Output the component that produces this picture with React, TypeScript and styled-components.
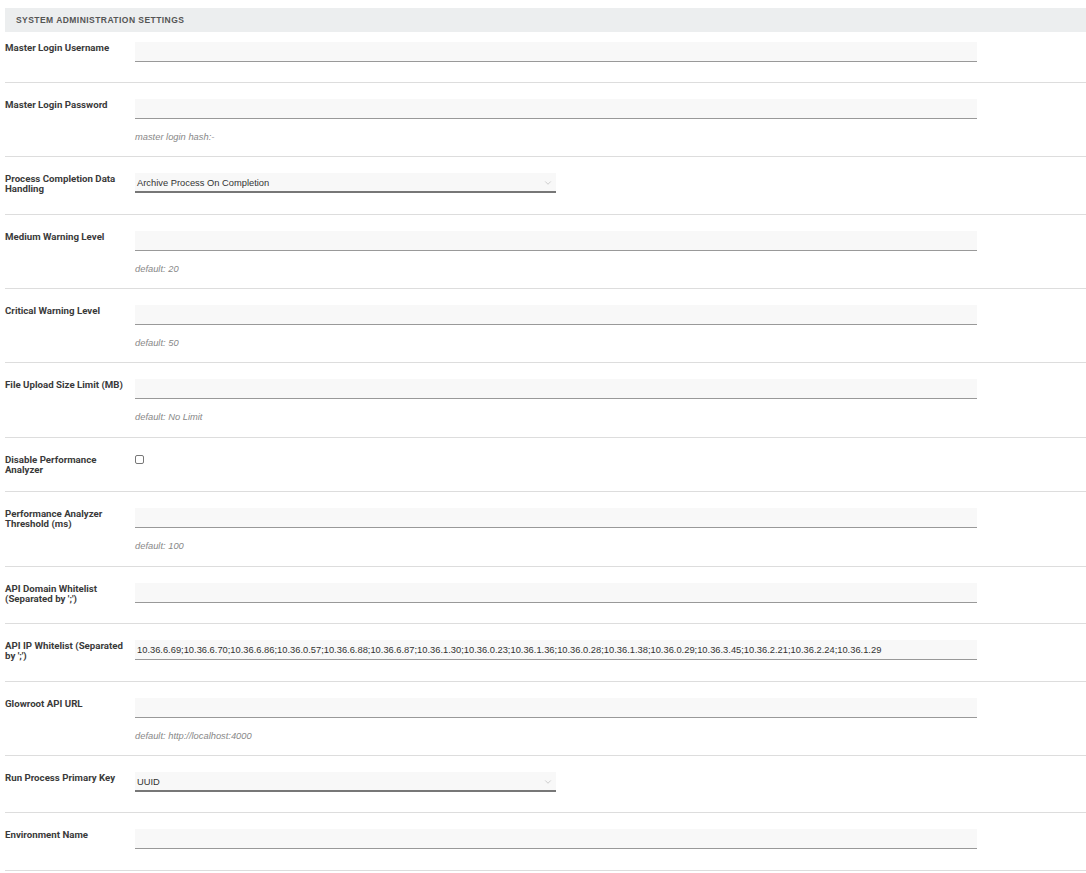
import React from "react";
import styled, { createGlobalStyle } from "styled-components";
import { ChevronDown } from "lucide-react";

const GlobalStyle = createGlobalStyle`
  html, body {
    margin: 0;
    padding: 0;
    background: #fff;
  }
  body {
    font-family: "Liberation Sans", Arial, sans-serif;
    color: #333;
  }
`;

type Field = {
  label: string;
  kind: "input" | "select" | "checkbox";
  value?: string;
  hint?: string;
  pad?: number;
};

const IP_LIST =
  "10.36.6.69;10.36.6.70;10.36.6.86;10.36.0.57;10.36.6.88;10.36.6.87;10.36.1.30;10.36.0.23;10.36.1.36;10.36.0.28;10.36.1.38;10.36.0.29;10.36.3.45;10.36.2.21;10.36.2.24;10.36.1.29";

const fields: Field[] = [
  { label: "Master Login Username", kind: "input" },
  { label: "Master Login Password", kind: "input", hint: "master login hash:-" },
  {
    label: "Process Completion Data Handling",
    kind: "select",
    value: "Archive Process On Completion",
  },
  { label: "Medium Warning Level", kind: "input", hint: "default: 20" },
  { label: "Critical Warning Level", kind: "input", hint: "default: 50" },
  {
    label: "File Upload Size Limit (MB)",
    kind: "input",
    hint: "default: No Limit",
    pad: 13,
  },
  { label: "Disable Performance Analyzer", kind: "checkbox", pad: 16 },
  {
    label: "Performance Analyzer Threshold (ms)",
    kind: "input",
    hint: "default: 100",
    pad: 13,
  },
  { label: "API Domain Whitelist (Separated by ';')", kind: "input", pad: 19 },
  { label: "API IP Whitelist (Separated by ';')", kind: "input", value: IP_LIST },
  {
    label: "Glowroot API URL",
    kind: "input",
    hint: "default: http://localhost:4000",
  },
  { label: "Run Process Primary Key", kind: "select", value: "UUID" },
  { label: "Environment Name", kind: "input", pad: 21 },
];

function App() {
  return (
    <>
      <GlobalStyle />
      <Page>
        <SectionHeader>System Administration Settings</SectionHeader>
        {fields.map((f, i) => (
          <Row
            key={f.label}
            $top={i === 0 ? 10 : 16}
            $bottom={f.pad ?? (f.hint ? 12 : 20)}
          >
            <Label>{f.label}</Label>
            <FieldCol>
              {f.kind === "input" && (
                <TextInput type="text" defaultValue={f.value ?? ""} />
              )}
              {f.kind === "select" && (
                <SelectBox>
                  <span>{f.value}</span>
                  <ChevronDown size={10} strokeWidth={1.3} color="#a8a8a8" />
                </SelectBox>
              )}
              {f.kind === "checkbox" && <Checkbox type="checkbox" />}
              {f.hint && <Hint>{f.hint}</Hint>}
            </FieldCol>
          </Row>
        ))}
      </Page>
    </>
  );
}

export default App;

const Page = styled.div`
  padding: 8px 0 0 5px;
`;

const SectionHeader = styled.div`
  height: 24px;
  display: flex;
  align-items: center;
  padding-left: 11px;
  background: #eceeef;
  font-family: "Liberation Sans", Arial, sans-serif;
  font-weight: 700;
  font-size: 8.5px;
  letter-spacing: 0.45px;
  text-transform: uppercase;
  color: #555;
`;

const Row = styled.div<{ $top: number; $bottom: number }>`
  display: flex;
  align-items: flex-start;
  padding-top: ${(p) => p.$top}px;
  padding-bottom: ${(p) => p.$bottom}px;
  border-bottom: 1px solid #dddddd;
`;

const Label = styled.div`
  width: 122px;
  margin-right: 8px;
  flex-shrink: 0;
  font-family: Roboto, "Liberation Sans", sans-serif;
  font-weight: 700;
  font-size: 9.7px;
  line-height: 10px;
  color: #3a3a3a;
  padding-top: 1px;
`;

const FieldCol = styled.div`
  display: flex;
  flex-direction: column;
  width: 842px;
`;

const TextInput = styled.input`
  box-sizing: border-box;
  width: 842px;
  height: 20px;
  margin: 0;
  padding: 0 2px;
  border: none;
  border-bottom: 1px solid #999;
  background: #f8f8f8;
  font-family: "Liberation Sans", Arial, sans-serif;
  font-size: 9.33px;
  color: #333;
  outline: none;
`;

const SelectBox = styled.div`
  box-sizing: border-box;
  width: 421px;
  height: 20px;
  display: flex;
  align-items: center;
  justify-content: space-between;
  padding: 2px 3px 0 2px;
  background: #f8f8f8;
  border-bottom: 2px solid #777;
  font-size: 9.33px;
  color: #333;
`;

const Checkbox = styled.input`
  appearance: none;
  box-sizing: border-box;
  width: 9px;
  height: 9px;
  margin: 1px 0 0 0;
  border: 1px solid #777;
  border-radius: 2px;
  background: #fff;
`;

const Hint = styled.div`
  margin-top: 11px;
  line-height: 14px;
  font-size: 9.33px;
  font-style: italic;
  color: #888;
`;
